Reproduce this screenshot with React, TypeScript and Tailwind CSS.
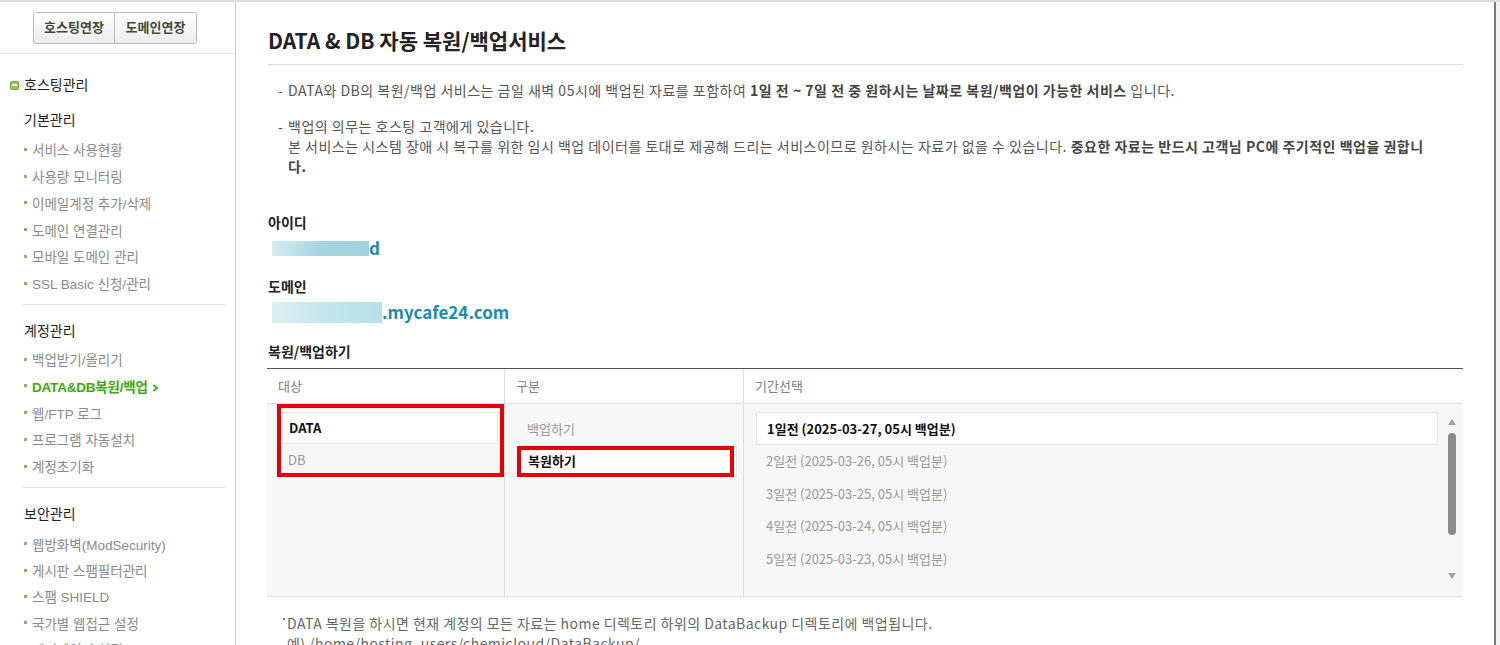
import React from "react";

type Section = { title: string; items: string[]; active?: number; listClass: string; rowClass: string };

const sections: Section[] = [
  {
    title: "기본관리",
    items: ["서비스 사용현황", "사용량 모니터링", "이메일계정 추가/삭제", "도메인 연결관리", "모바일 도메인 관리", "SSL Basic 신청/관리"],
    listClass: "mt-[8px]",
    rowClass: "flex h-[26.8px] items-center pl-[1px]",
  },
  {
    title: "계정관리",
    items: ["백업받기/올리기", "DATA&DB복원/백업", "웹/FTP 로그", "프로그램 자동설치", "계정초기화"],
    active: 1,
    listClass: "mt-[6px]",
    rowClass: "flex h-[26.8px] items-center pl-[1px]",
  },
  {
    title: "보안관리",
    items: ["웹방화벽(ModSecurity)", "게시판 스팸필터관리", "스팸 SHIELD", "국가별 웹접근 설정", "에러페이지 설정"],
    listClass: "mt-[8px]",
    rowClass: "flex h-[26.3px] items-center pl-[1px]",
  },
];

const periods = [
  "1일전 (2025-03-27, 05시 백업분)",
  "2일전 (2025-03-26, 05시 백업분)",
  "3일전 (2025-03-25, 05시 백업분)",
  "4일전 (2025-03-24, 05시 백업분)",
  "5일전 (2025-03-23, 05시 백업분)",
  "6일전 (2025-03-22, 05시 백업분)",
  "7일전 (2025-03-21, 05시 백업분)",
];

function Sidebar() {
  return (
    <aside className="w-[236px] shrink-0 border-r border-[#cfcfcf] bg-white font-['Liberation_Sans','Noto_Sans_CJK_KR',sans-serif]">
      <div className="h-[52px] border-b border-[#e6e6e6] pl-[33px] pt-[10px]">
        <div className="flex h-[32px] w-fit overflow-hidden rounded-[3px] border border-[#b9b9b9] text-[13px] font-bold text-[#414a39]">
          <div className="flex w-[80px] items-center justify-center bg-gradient-to-b from-white to-[#ececec]">호스팅연장</div>
          <div className="flex w-[82px] items-center justify-center border-l border-[#b9b9b9] bg-gradient-to-b from-white to-[#ececec]">도메인연장</div>
        </div>
      </div>
      <div className="mt-[21px] flex h-[20px] items-center pl-[10px]">
        <span className="flex h-[9px] w-[9px] items-center justify-center rounded-[2px] border border-[#6ea43d] bg-[#92c95a]">
          <span className="h-[1.5px] w-[5px] bg-white" />
        </span>
        <span className="ml-[5px] text-[14px] text-[#222]">호스팅관리</span>
      </div>
      <div className="ml-[23px] mr-[10px] mt-[15px]">
        {sections.map((s, si) => (
          <div key={s.title} className={si > 0 ? "mt-[5px] border-t border-[#e3e3e3] pt-[17px]" : ""}>
            <div className="flex h-[20px] items-center pl-[1px] text-[14px] text-[#222]">{s.title}</div>
            <ul className={s.listClass}>
              {s.items.map((it, i) => {
                const active = s.active === i;
                return (
                  <li key={it} className={s.rowClass}>
                    <span className="mr-[5px] h-[3px] w-[3px] -translate-y-[2px] bg-[#8eaa6c]" />
                    <span
                      className={
                        active
                          ? "text-[13.5px] font-bold tracking-[-0.2px] text-[#3aab0c]"
                          : "text-[13.5px] text-[#8a8a8a]"
                      }
                    >
                      {it}
                    </span>
                    {active && (
                      <svg width="7" height="8" viewBox="0 0 7 8" className="ml-[4px]">
                        <polyline points="1.5,1 5,4 1.5,7" fill="none" stroke="#3aab0c" strokeWidth="1.8" />
                      </svg>
                    )}
                  </li>
                );
              })}
            </ul>
          </div>
        ))}
      </div>
    </aside>
  );
}

function Scrollbar() {
  return (
    <svg width="20" height="171" viewBox="0 0 20 171" className="shrink-0">
      <polygon points="6,13 14,13 10,7" fill="#a3a3a3" />
      <rect x="6" y="21" width="8" height="102" rx="4" fill="#8b8b8b" />
      <polygon points="6,161 14,161 10,167" fill="#a3a3a3" />
    </svg>
  );
}

function Main() {
  return (
    <main className="min-w-0 flex-1 border-r-2 border-[#7b7b7b] pl-[32px] pr-[31px]">
      <h1 className="mt-[24px] border-b border-[#dcdcdc] pb-[10px] text-[21px] font-bold leading-[28px] text-[#222]">
        DATA &amp; DB 자동 복원/백업서비스
      </h1>

      <div className="mt-[15px] pl-[10px] text-[14px] leading-[20px] tracking-[0.5px] text-[#555]">
        <div className="flex">
          <span className="w-[10px] shrink-0">-</span>
          <p className="whitespace-nowrap">
            DATA와 DB의 복원/백업 서비스는 금일 새벽 05시에 백업된 자료를 포함하여{" "}
            <b className="text-[#444]">1일 전 ~ 7일 전 중 원하시는 날짜로 복원/백업이 가능한 서비스</b> 입니다.
          </p>
        </div>
        <div className="mt-[16px] flex">
          <span className="w-[10px] shrink-0">-</span>
          <p className="whitespace-nowrap">
            백업의 의무는 호스팅 고객에게 있습니다.
            <br />
            본 서비스는 시스템 장애 시 복구를 위한 임시 백업 데이터를 토대로 제공해 드리는 서비스이므로 원하시는 자료가 없을 수 있습니다.{" "}
            <b className="text-[#444]">
              중요한 자료는 반드시 고객님 PC에 주기적인 백업을 권합니
              <br />
              다.
            </b>
          </p>
        </div>
      </div>

      <div className="mt-[36px] h-[20px] text-[14px] font-bold leading-[20px] text-[#222]">아이디</div>
      <div className="mt-[4px] flex h-[24px] items-center pl-[4px]">
        <span className="h-[15px] w-[97px] bg-gradient-to-r from-[#d4ecf2] via-[#a6d4e0] to-[#a3d2de]" />
        <span className="text-[17px] font-bold leading-[24px] text-[#1a8bb0]">d</span>
      </div>

      <div className="mt-[16px] h-[20px] text-[14px] font-bold leading-[20px] text-[#222]">도메인</div>
      <div className="mt-[4px] flex h-[24px] items-center pl-[4px]">
        <span className="h-[21px] w-[110px] bg-gradient-to-r from-[#dcf0f4] via-[#c2e4ec] to-[#b8e0ea]" />
        <span className="text-[17px] font-bold leading-[24px] text-[#1a8bb0]">.mycafe24.com</span>
      </div>

      <div className="mt-[17px] h-[20px] text-[14px] font-bold leading-[20px] text-[#222]">복원/백업하기</div>

      <div className="ml-[-1px] mt-[7px] border-t border-[#555]">
        <div className="flex h-[35px] border-b border-[#dcdcdc] text-[13px] text-[#808080]">
          <div className="flex w-[238px] items-center border-r border-[#dcdcdc] pl-[11px]">대상</div>
          <div className="flex w-[239px] items-center border-r border-[#dcdcdc] pl-[11px]">구분</div>
          <div className="flex flex-1 items-center pl-[11px]">기간선택</div>
        </div>
        <div className="flex h-[193px] border-b border-[#dcdcdc] bg-[#f7f7f7] text-[13px]">
          <div className="relative w-[238px] border-r border-[#dcdcdc]">
            <div className="ml-[15px] mt-[8px] w-[216px]">
              <div className="flex h-[32px] items-center border border-[#e6e6e6] bg-white pl-[6px] font-bold text-[#111]">DATA</div>
              <div className="flex h-[32px] items-center pl-[6px] text-[#999]">DB</div>
            </div>
            <div className="absolute left-[10px] top-0 h-[73px] w-[227px] border-4 border-[#e60000]" />
          </div>
          <div className="relative w-[239px] border-r border-[#dcdcdc]">
            <div className="ml-[13px] mt-[8px] w-[219px]">
              <div className="flex h-[33px] items-center pl-[9px] text-[#999]">백업하기</div>
              <div className="flex h-[32px] items-center border border-[#e6e6e6] bg-white pl-[9px] font-bold text-[#111]">복원하기</div>
            </div>
            <div className="absolute left-[12px] top-[42px] h-[31px] w-[217px] border-4 border-[#e60000]" />
          </div>
          <div className="flex-1">
            <div className="ml-[12px] mr-[1px] mt-[8px] flex h-[171px]">
              <div className="min-w-0 flex-1 overflow-hidden pr-[4px]">
                {periods.map((p, i) => (
                  <div
                    key={p}
                    className={
                      i === 0
                        ? "flex h-[32.6px] items-center border border-[#e6e6e6] bg-white pl-[10px] font-bold text-[#111]"
                        : "flex h-[32.6px] items-center pl-[10px] text-[#999]"
                    }
                  >
                    {p}
                  </div>
                ))}
              </div>
              <Scrollbar />
            </div>
          </div>
        </div>
      </div>

      <div className="mt-[16px] flex pl-[15px] text-[14px] leading-[20px] tracking-[0.45px] text-[#666]">
        <span className="mr-[2px] mt-[5px] h-[2px] w-[2px] shrink-0 bg-[#777]" />
        <p className="whitespace-nowrap">
          DATA 복원을 하시면 현재 계정의 모든 자료는 home 디렉토리 하위의 DataBackup 디렉토리에 백업됩니다.
          <br />
          예) /home/hosting_users/chemicloud/DataBackup/
        </p>
      </div>
    </main>
  );
}

export default function App() {
  return (
    <div className="flex h-[645px] w-[1500px] overflow-hidden border-t-2 border-[#dedede] bg-white font-['Noto_Sans_CJK_KR',sans-serif]">
      <Sidebar />
      <Main />
      <div className="w-[4px] shrink-0 bg-[#f2f2f2]" />
    </div>
  );
}
